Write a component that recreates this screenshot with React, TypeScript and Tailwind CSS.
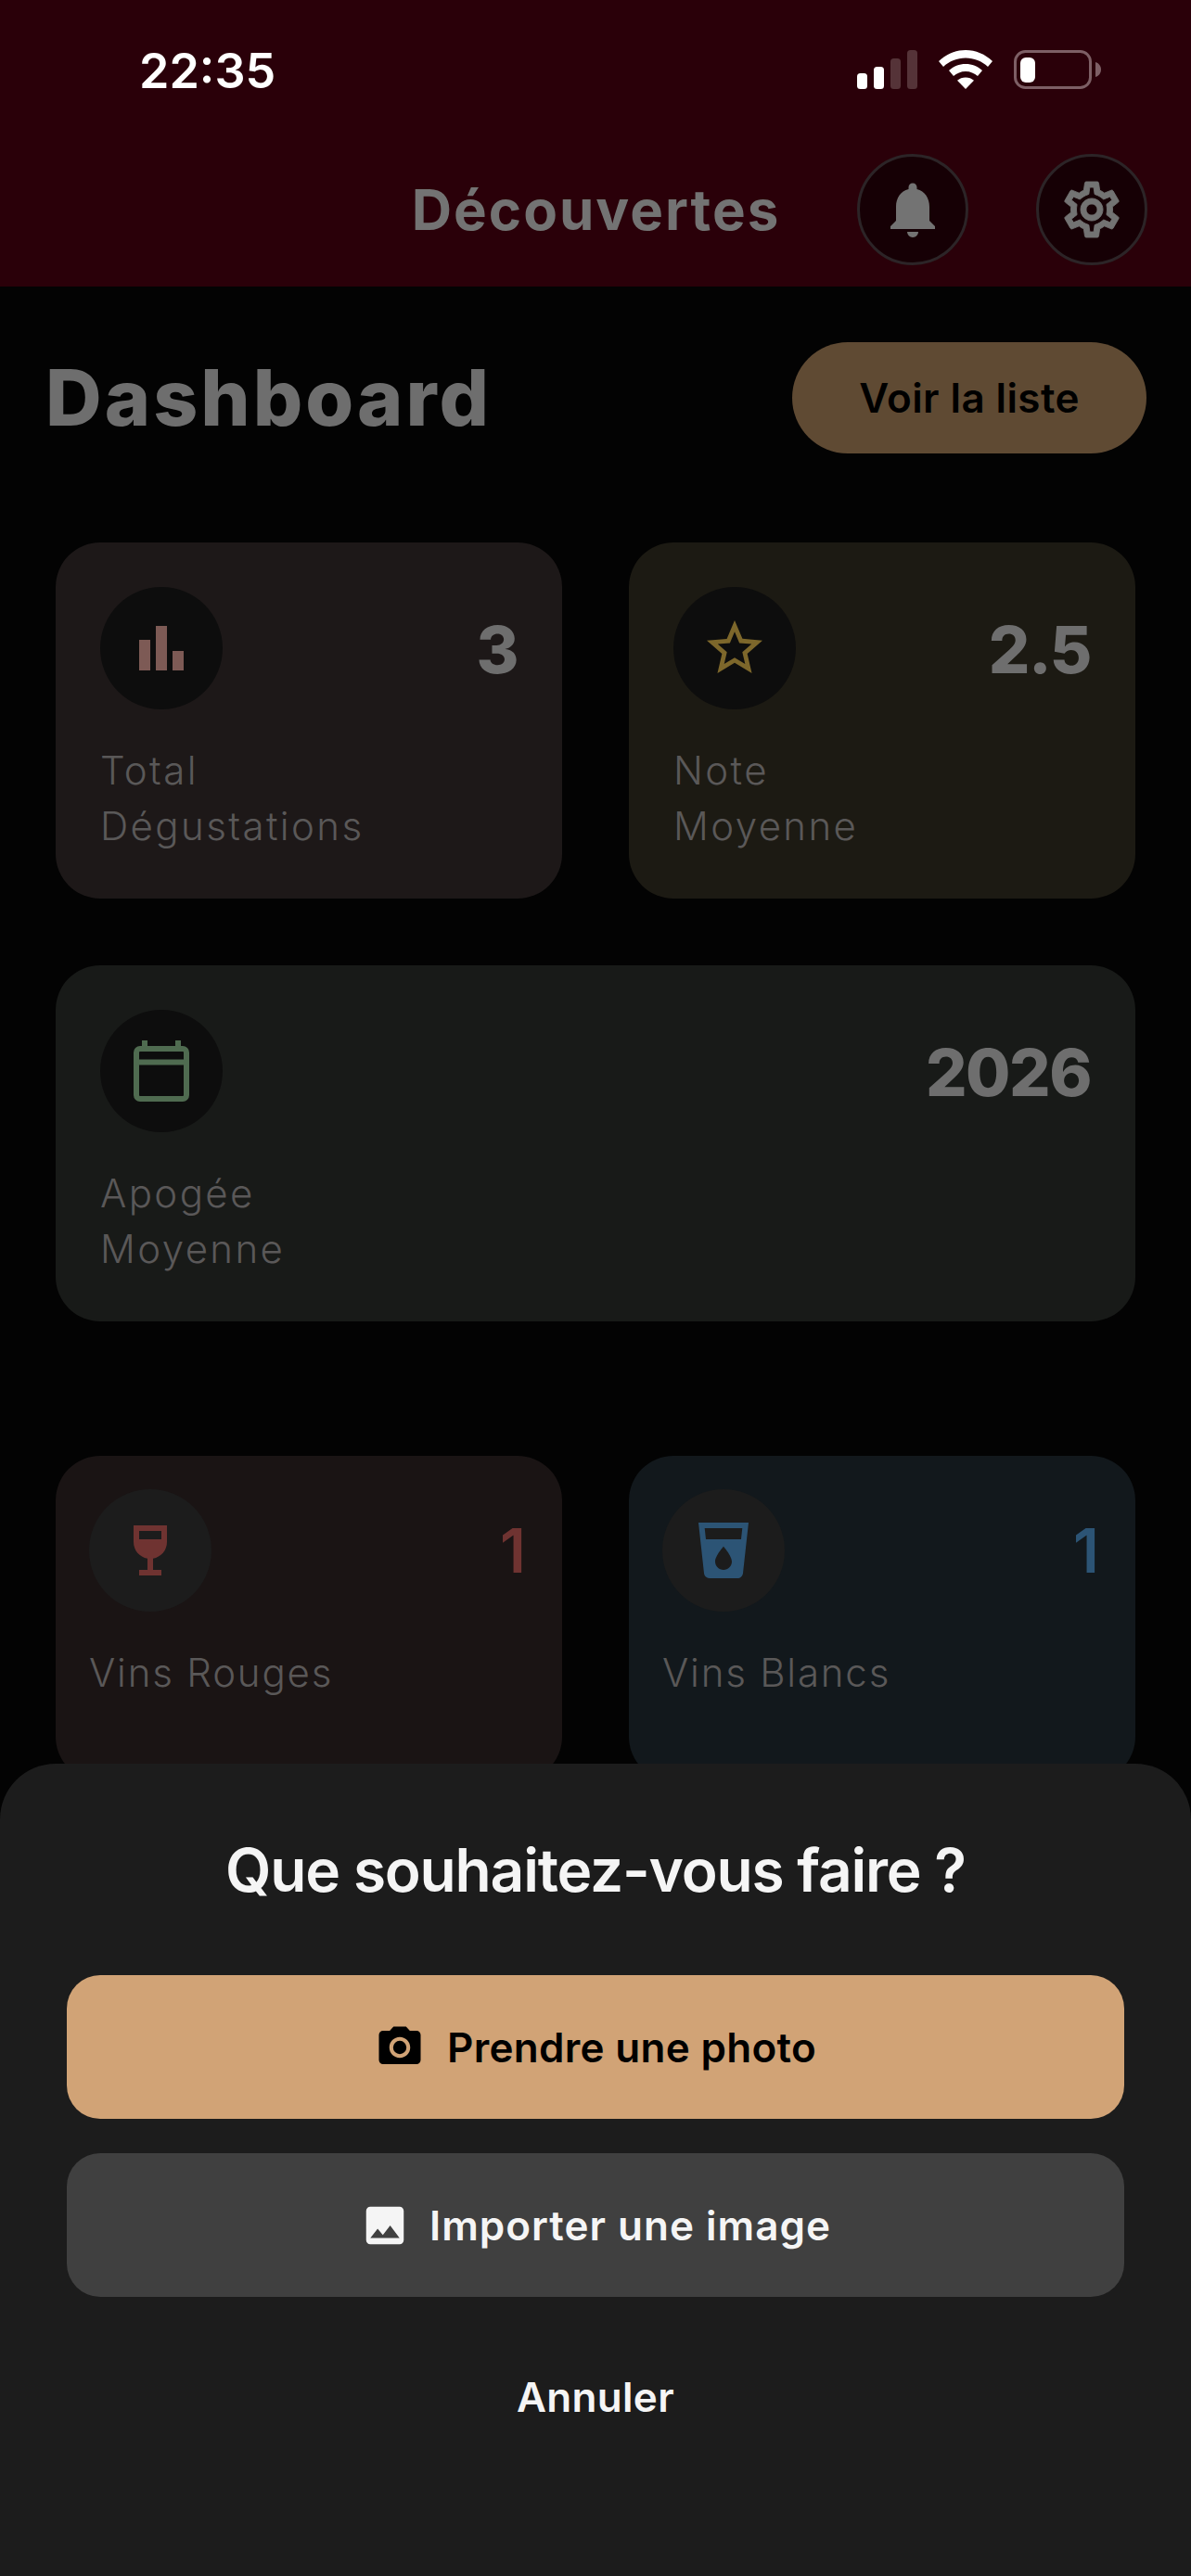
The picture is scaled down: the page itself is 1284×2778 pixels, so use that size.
import React from 'react';
import { MdImage, MdLocalDrink, MdNotifications, MdPhotoCamera, MdStarBorder, MdWineBar } from 'react-icons/md';

const BarsIcon = () => (
  <svg width="48" height="48" viewBox="0 0 48 48" fill="#7d5a55">
    <rect x="0" y="15" width="12" height="33" />
    <rect x="18" y="0" width="12" height="48" />
    <rect x="36" y="27" width="12" height="21" />
  </svg>
);

const CalendarIcon = () => (
  <svg width="60" height="66" viewBox="0 0 60 66" fill="none" stroke="#4f6b50" strokeWidth="6">
    <rect x="3" y="9" width="54" height="54" rx="4" />
    <path d="M3 23.500h54M12 0v8M48 0v8" />
  </svg>
);

// material outlined gear, with a little stroke because the reference draws it heavier
const GearIcon = () => (
  <svg width="72" height="72" viewBox="0 0 24 24" fill="currentColor" stroke="currentColor" strokeWidth="0.3">
    <path d="M19.43 12.98c.04-.32.07-.64.07-.98 0-.34-.03-.66-.07-.98l2.11-1.65c.19-.15.24-.42.12-.64l-2-3.46c-.09-.16-.26-.25-.44-.25-.06 0-.12.01-.17.03l-2.49 1c-.52-.4-1.08-.73-1.69-.98l-.38-2.65C14.46 2.18 14.25 2 14 2h-4c-.25 0-.46.18-.49.42l-.38 2.65c-.61.25-1.17.59-1.69.98l-2.49-1c-.06-.02-.12-.03-.18-.03-.17 0-.34.09-.43.25l-2 3.46c-.13.22-.07.49.12.64l2.11 1.65c-.04.32-.07.65-.07.98 0 .33.03.66.07.98l-2.11 1.65c-.19.15-.24.42-.12.64l2 3.46c.09.16.26.25.44.25.06 0 .12-.01.17-.03l2.49-1c.52.4 1.08.73 1.69.98l.38 2.65c.03.24.24.42.49.42h4c.25 0 .46-.18.49-.42l.38-2.65c.61-.25 1.17-.59 1.69-.98l2.49 1c.06.02.12.03.18.03.17 0 .34-.09.43-.25l2-3.46c.12-.22.07-.49-.12-.64l-2.11-1.65zm-1.98-1.71c.04.31.05.52.05.73 0 .21-.02.43-.05.73l-.14 1.13.89.7 1.08.84-.7 1.21-1.27-.51-1.04-.42-.9.68c-.43.32-.84.56-1.25.73l-1.06.43-.16 1.13-.2 1.35h-1.4l-.19-1.35-.16-1.13-1.06-.43c-.43-.18-.83-.41-1.23-.71l-.91-.7-1.06.43-1.27.51-.7-1.21 1.08-.84.89-.7-.14-1.13c-.03-.31-.05-.54-.05-.74s.02-.43.05-.73l.14-1.13-.89-.7-1.08-.84.7-1.21 1.27.51 1.04.42.9-.68c.43-.32.84-.56 1.25-.73l1.06-.43.16-1.13.2-1.35h1.39l.19 1.35.16 1.13 1.06.43c.43.18.83.41 1.23.71l.91.7 1.06-.43 1.27-.51.7 1.21-1.07.85-.89.7.14 1.13zM12 8c-2.21 0-4 1.79-4 4s1.79 4 4 4 4-1.79 4-4-1.79-4-4-4zm0 6c-1.1 0-2-.9-2-2s.9-2 2-2 2 .9 2 2-.9 2-2 2z" />
  </svg>
);

const StatusIcons = () => (
  <div className="flex items-end">
    <svg width="66" height="42" viewBox="0 0 66 42" fill="#fff">
      <rect x="0" y="25" width="11" height="17" rx="3.5" />
      <rect x="18" y="18" width="11" height="24" rx="3.5" />
      <rect x="36" y="9" width="11" height="33" rx="3.5" fill="#553338" />
      <rect x="54" y="0" width="11" height="42" rx="3.5" fill="#553338" />
    </svg>
    <svg className="ml-[22px]" width="58" height="42" viewBox="0 0 58 42" fill="#fff">
      <path d="M29 0c11 0 21 4.400 29 12l-5 6c-6.500-6-15-9.500-24-9.500S11.500 12 5 18L0 12C8 4.400 18 0 29 0z" />
      <path d="M29 15c7 0 13 2.600 18 7l-5 6c-3.500-3-8-5-13-5s-9.500 2-13 5l-5-6c5-4.400 11-7 18-7z" />
      <path d="M29 29.500c3.500 0 6.500 1.200 9 3.300L29 42l-9-9.200c2.500-2.100 5.500-3.300 9-3.300z" />
    </svg>
    <svg className="ml-[23px]" width="94" height="42" viewBox="0 0 94 42" fill="none">
      <rect x="1.500" y="1.500" width="81" height="39" rx="11" stroke="#7d5f65" strokeWidth="3" />
      <rect x="7" y="8" width="16" height="27" rx="6" fill="#fff" />
      <path d="M88 13c3.500 1 6 4 6 8s-2.500 7-6 8z" fill="#7d5f65" />
    </svg>
  </div>
);

const HeaderButton = ({ children }: { children: React.ReactNode }) => (
  <button className="flex h-[120px] w-[120px] items-center justify-center rounded-full border-[3px] border-[#2c2427] bg-[#160005] text-[#737373]">
    {children}
  </button>
);

const StatCard = ({ bg, icon, value, lines, className }: { bg: string; icon: React.ReactNode; value: string; lines: string[]; className?: string }) => (
  <div className={`h-[384px] rounded-[48px] p-12 ${bg} ${className ?? ''}`}>
    <div className="flex items-center justify-between">
      <div className="flex h-[132px] w-[132px] items-center justify-center rounded-full bg-[#0d0d0d]">{icon}</div>
      <span className="pt-[3px] text-[70px] font-extrabold leading-none tracking-[-1.5px] text-[#6e6e6e]">{value}</span>
    </div>
    <p className="mt-[36px] text-[42px] font-light leading-[60px] tracking-[2.4px] text-[#5a5858]">
      {lines.map((line) => (
        <span key={line} className="block">{line}</span>
      ))}
    </p>
  </div>
);

const WineCard = ({ bg, icon, value, valueColor, label }: { bg: string; icon: React.ReactNode; value: string; valueColor: string; label: string }) => (
  <div className={`h-[351px] rounded-[48px] p-9 ${bg}`}>
    <div className="flex items-center justify-between">
      <div className="flex h-[132px] w-[132px] items-center justify-center rounded-full bg-[#1c1c1c]">{icon}</div>
      <span className={`pr-[3px] text-[66px] font-semibold leading-none ${valueColor}`}>{value}</span>
    </div>
    <p className="mt-[36px] text-[42px] font-light leading-[60px] tracking-[1.8px] text-[#5a5858]">{label}</p>
  </div>
);

export default function App() {
  return (
    <div className="relative h-[2778px] w-[1284px] overflow-hidden bg-[#030303] font-['Inter','Open_Sans',sans-serif]">
      <header className="h-[309px] bg-[#2a0009]">
        <div className="flex items-start justify-between pl-[150px] pr-[97px] pt-[54px]">
          <span className="text-[52px] font-semibold leading-[46px] text-white">22:35</span>
          <StatusIcons />
        </div>
        <div className="mt-[66px] grid grid-cols-[1fr_auto_1fr] items-center pl-12 pr-[47px]">
          <div />
          <h1 className="text-[60px] font-bold leading-none tracking-[2px] text-[#737373]">Découvertes</h1>
          <div className="flex justify-end gap-[73px]">
            <HeaderButton><MdNotifications size={72} /></HeaderButton>
            <HeaderButton><GearIcon /></HeaderButton>
          </div>
        </div>
      </header>

      <main>
        <div className="flex items-center justify-between pl-[49px] pr-[48px] pt-[60px]">
          <h2 className="text-[84px] font-extrabold leading-none tracking-[3px] text-[#6e6e6e]">Dashboard</h2>
          <button className="h-[120px] w-[382px] rounded-[60px] bg-[#5f4a33] text-[44px] font-semibold tracking-[0.4px] text-black">Voir la liste</button>
        </div>

        <div className="mt-[96px] grid grid-cols-2 gap-x-[72px] gap-y-[72px] px-[60px]">
          <StatCard bg="bg-[#1d1818]" icon={<BarsIcon />} value="3" lines={['Total', 'Dégustations']} />
          <StatCard bg="bg-[#1c1a13]" icon={<MdStarBorder size={72} color="#7d672b" />} value="2.5" lines={['Note', 'Moyenne']} />
          <StatCard className="col-span-2" bg="bg-[#181a18]" icon={<CalendarIcon />} value="2026" lines={['Apogée', 'Moyenne']} />
        </div>

        <div className="mt-[145px] grid grid-cols-2 gap-x-[72px] px-[60px]">
          <WineCard bg="bg-[#1a1414]" icon={<MdWineBar size={72} color="#6f3331" />} value="1" valueColor="text-[#6f3331]" label="Vins Rouges" />
          <WineCard bg="bg-[#12181c]" icon={<MdLocalDrink size={72} color="#2c5475" />} value="1" valueColor="text-[#2c5475]" label="Vins Blancs" />
        </div>
      </main>

      {/* bottom sheet */}
      <div className="absolute inset-x-0 bottom-0 h-[876px] rounded-t-[60px] bg-[#1c1c1c] px-[72px] pt-[74px]">
        <h3 className="text-center text-[64px] font-semibold leading-[82px] tracking-[-1.2px] text-[#f5f5f5]">Que souhaitez-vous faire ?</h3>
        <button className="mt-[72px] flex h-[155px] w-full items-center justify-center gap-[24px] rounded-[36px] bg-[#d1a376] text-[44px] font-semibold tracking-[0.3px] text-black">
          <MdPhotoCamera size={54} />
          Prendre une photo
        </button>
        <button className="mt-[37px] flex h-[155px] w-full items-center justify-center gap-[21px] rounded-[36px] bg-[#404040] text-[44px] font-semibold tracking-[1px] text-[#f5f5f5]">
          <MdImage size={54} />
          Importer une image
        </button>
        <button className="mx-auto mt-[78px] block text-[44px] font-semibold leading-[60px] tracking-[0.3px] text-[#f5f5f5]">Annuler</button>
      </div>
    </div>
  );
}
